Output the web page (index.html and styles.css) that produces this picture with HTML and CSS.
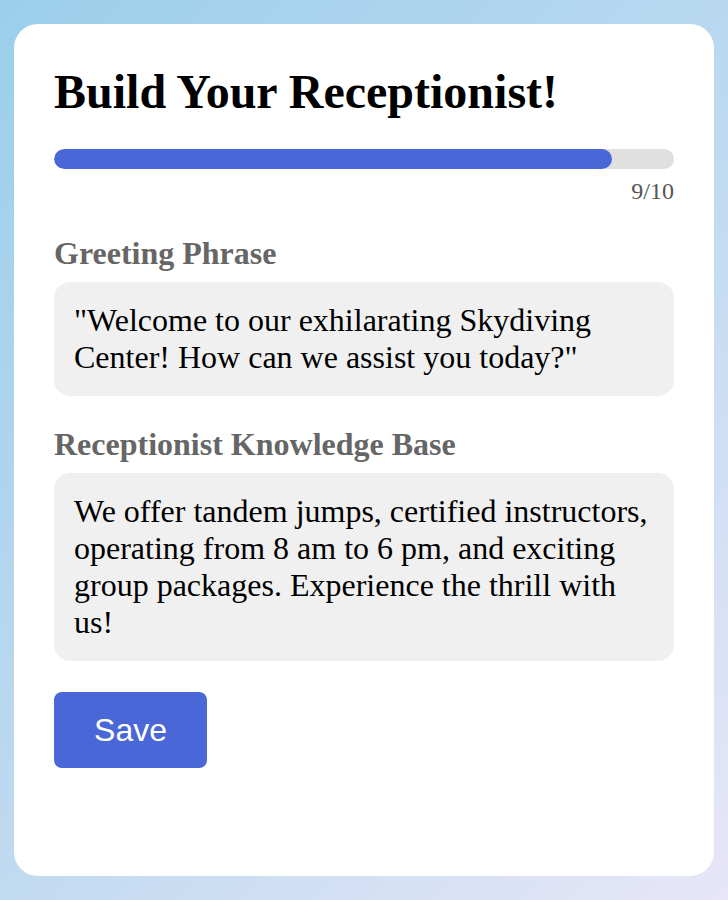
FILE: index.html
```html
<!DOCTYPE html>
<html lang="en">
<head>
  <meta charset="UTF-8">
  <meta name="viewport" content="width=device-width, initial-scale=1.0">
  <title>Build Your Receptionist</title>
  <link rel="stylesheet" href="styles.css">
</head>
<body>
  <div class="card">
    <h1>Build Your Receptionist!</h1>

    <div class="progress">
      <div class="progress-fill" style="width: 90%"></div>
    </div>
    <div class="progress-label">9/10</div>

    <div class="field">
      <label class="field-label">Greeting Phrase</label>
      <div class="field-box">"Welcome to our exhilarating Skydiving Center! How can we assist you today?"</div>
    </div>

    <div class="field">
      <label class="field-label">Receptionist Knowledge Base</label>
      <div class="field-box">We offer tandem jumps, certified instructors, operating from 8 am to 6 pm, and exciting group packages. Experience the thrill with us!</div>
    </div>

    <button class="save-btn">Save</button>
  </div>
</body>
</html>
```

FILE: styles.css
```css
html,
body {
  height: 100%;
}

body {
  margin: 0;
  padding: 24px 14px;
  box-sizing: border-box;
  font-family: "Liberation Serif", "Times New Roman", serif;
  background: linear-gradient(135deg, #9bcfea 0%, #bcd9f0 50%, #e8e6f8 100%);
}

.card {
  background: #ffffff;
  border-radius: 24px;
  padding: 40px;
  height: 100%;
  box-sizing: border-box;
}

h1 {
  margin: 0 0 30px;
  font-size: 48px;
  color: #000;
}

.progress {
  height: 20px;
  background: #e0e0e0;
  border-radius: 10px;
  overflow: hidden;
}

.progress-fill {
  height: 100%;
  background: #4a67d8;
  border-radius: 10px;
}

.progress-label {
  text-align: right;
  font-size: 24px;
  color: #555;
  margin-top: 9px;
}

.field {
  margin-top: 30px;
}

.field-label {
  display: block;
  font-weight: bold;
  font-size: 32px;
  color: #666;
  margin-bottom: 10px;
}

.field-box {
  background: #f0f0f0;
  border-radius: 16px;
  padding: 20px;
  font-size: 32px;
  color: #000;
}

.save-btn {
  margin-top: 31px;
  width: 153px;
  height: 76px;
  background-color: #4a67d8;
  color: #fff;
  border: none;
  border-radius: 8px;
  font-family: "Liberation Sans", Arial, sans-serif;
  font-size: 32px;
  cursor: pointer;
}
```
